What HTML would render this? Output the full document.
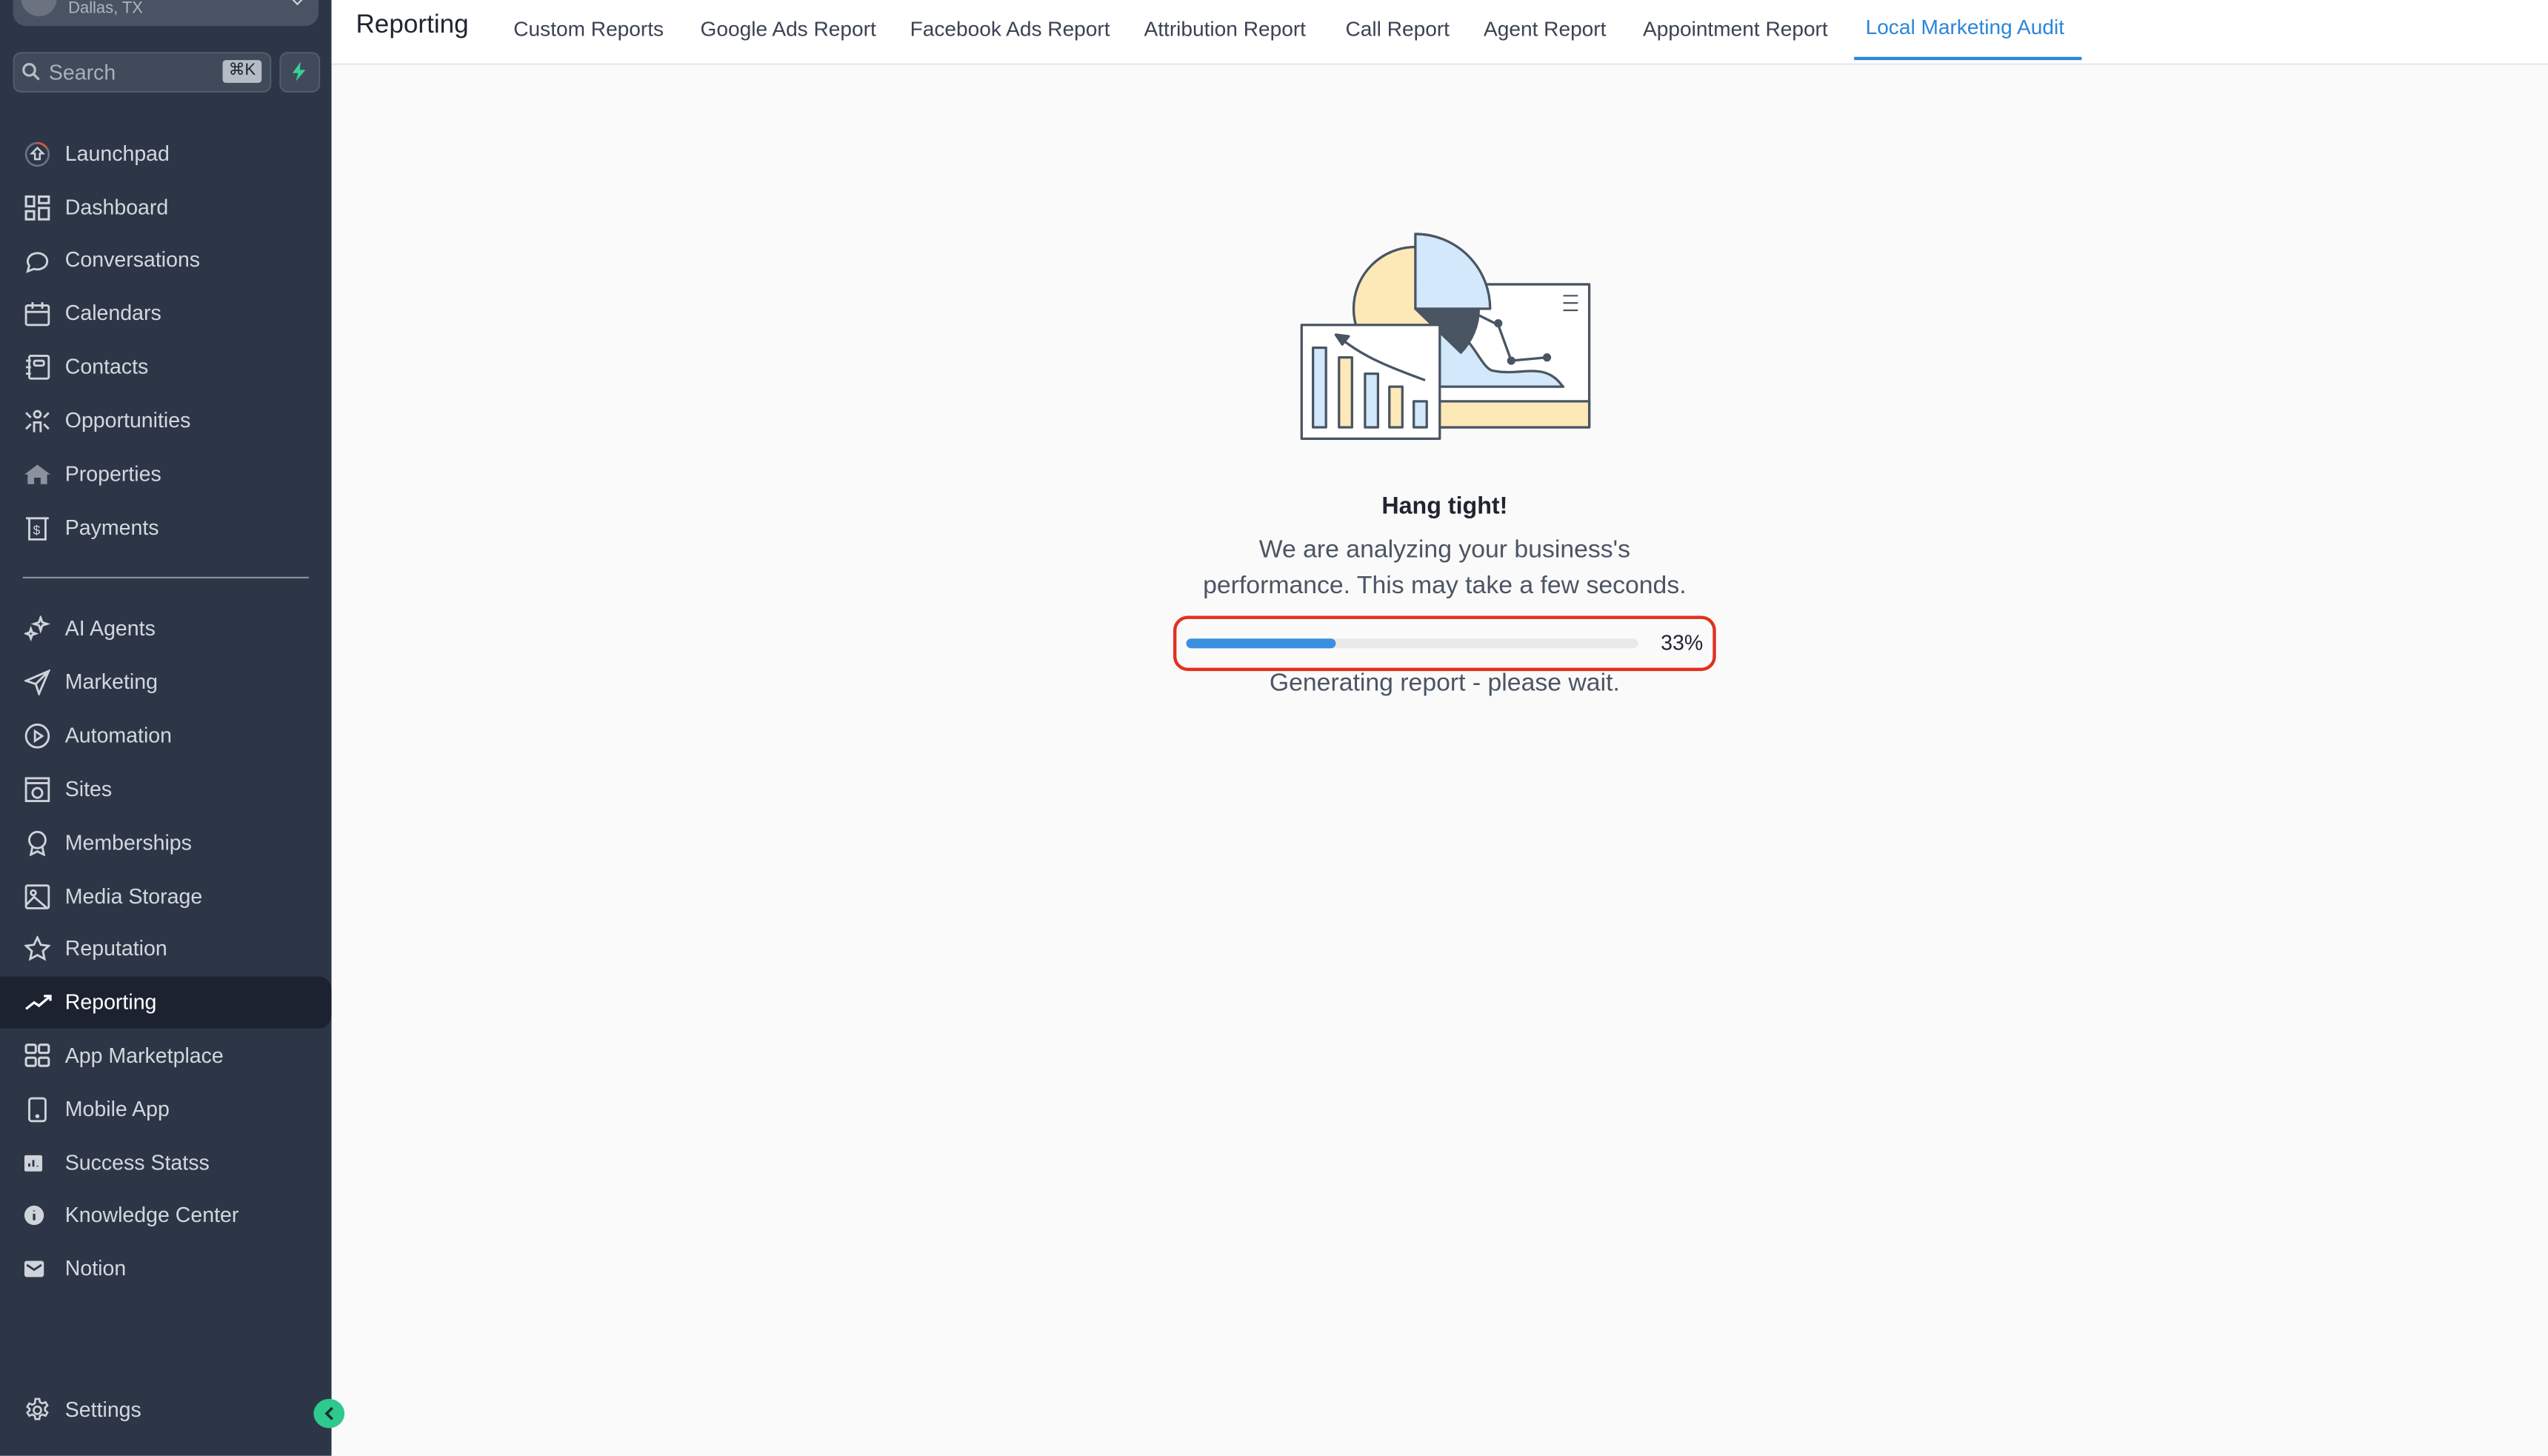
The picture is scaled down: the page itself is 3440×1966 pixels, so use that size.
<!DOCTYPE html>
<html><head><meta charset="utf-8"><style>
html,body{margin:0;padding:0;width:3440px;height:1966px;overflow:hidden;background:#fafafa;font-family:"Liberation Sans",sans-serif}
#w{position:absolute;left:0;top:0;width:1568px;height:896px;transform:scale(2.19388);transform-origin:0 0;background:#fafafa}
.sb{position:absolute;left:0;top:0;width:204px;height:896px;background:#2d3647}
.it{position:absolute;left:0;width:204px;height:32px;line-height:32px;color:#d3d7de;font-size:13px}
.it span{position:absolute;left:40px}
.it svg{position:absolute;left:15px;top:8px}
.act{background:#1c2230;border-radius:0 8px 8px 0;color:#fff}
.hdr{position:absolute;left:204px;top:0;right:0;height:39px;background:#fff;border-bottom:1px solid #e6e6e6}
.tab{position:absolute;top:10px;font-size:12.8px;color:#3b4252}
.c{position:absolute;left:204px;right:0;text-align:center;color:#4b5563}
</style></head><body><div id="w">
<div class="sb">
 <div style="position:absolute;left:8px;top:-14px;width:188px;height:30px;background:#4a5364;border-radius:8px"></div>
 <div style="position:absolute;left:13px;top:-12px;width:22px;height:22px;border-radius:50%;background:#6b7280"></div>
 <div style="position:absolute;left:42px;top:0;font-size:10px;color:#aeb4bd">Dallas, TX</div>
 <div style="position:absolute;left:180px;top:-4px;width:5px;height:5px;border-right:1.5px solid #cfd3da;border-bottom:1.5px solid #cfd3da;transform:rotate(45deg)"></div>
 <div style="position:absolute;left:8px;top:32px;width:157px;height:23px;background:#414a5a;border:1px solid #525b6a;border-radius:5px"></div>
 <svg style="position:absolute;left:13px;top:38px" width="12" height="12" viewBox="0 0 12 12"><circle cx="5" cy="5" r="3.5" stroke="#b7bcc5" stroke-width="1.5" fill="none"/><path d="M7.5 7.5L11 11" stroke="#b7bcc5" stroke-width="1.5"/></svg>
 <div style="position:absolute;left:30px;top:37px;font-size:13px;color:#a9afb9">Search</div>
 <div style="position:absolute;left:137px;top:37px;width:24px;height:14px;background:#b6bcc6;border-radius:2px;font-size:10px;line-height:14px;text-align:center;color:#1f2430">⌘K</div>
 <div style="position:absolute;left:172px;top:32px;width:23px;height:23px;background:#414a5a;border:1px solid #525b6a;border-radius:5px"></div>
 <svg style="position:absolute;left:178px;top:38px" width="12" height="12" viewBox="0 0 12 12"><path d="M7 0L2 7h3.5L4 12l6-7H6.5z" fill="#34d399"/></svg>

 <div class="it" style="top:79px"><svg width="16" height="16" viewBox="0 0 16 16"><circle cx="8" cy="8" r="7" stroke="#6b7482" fill="none" stroke-width="1.2"/><path d="M8 1a7 7 0 0 1 5.5 3" stroke="#e0533b" fill="none" stroke-width="1.2"/><path d="M8 4L4.5 7.5H6.5V11H9.5V7.5H11.5Z" stroke="#cfd3da" fill="none" stroke-width="1.1"/></svg><span>Launchpad</span></div>
 <div class="it" style="top:112px"><svg width="16" height="16" viewBox="0 0 16 16" fill="none" stroke="#cfd3da" stroke-width="1.4"><rect x="1" y="1" width="5" height="6"/><rect x="9" y="1" width="6" height="4"/><rect x="1" y="10" width="5" height="5"/><rect x="9" y="8" width="6" height="7"/></svg><span>Dashboard</span></div>
 <div class="it" style="top:144px"><svg width="16" height="16" viewBox="0 0 16 16" fill="none" stroke="#cfd3da" stroke-width="1.3"><path d="M2 15l1-3.5A6 5 0 1 1 6 13.5z"/></svg><span>Conversations</span></div>
 <div class="it" style="top:177px"><svg width="16" height="16" viewBox="0 0 16 16" fill="none" stroke="#cfd3da" stroke-width="1.3"><rect x="1" y="3" width="14" height="12" rx="1"/><path d="M1 7h14M5 1v4M11 1v4"/></svg><span>Calendars</span></div>
 <div class="it" style="top:210px"><svg width="16" height="16" viewBox="0 0 16 16" fill="none" stroke="#cfd3da" stroke-width="1.3"><rect x="3" y="1" width="12" height="14" rx="1"/><rect x="6" y="4" width="6" height="3" rx="1"/><path d="M1 4h3M1 8h3M1 12h3"/></svg><span>Contacts</span></div>
 <div class="it" style="top:243px"><svg width="16" height="16" viewBox="0 0 16 16" fill="none" stroke="#cfd3da" stroke-width="1.3"><circle cx="8" cy="4" r="2"/><path d="M6 15V9h4v6M1 3l3 3M15 3l-3 3M1 13l3-3M15 13l-3-3"/></svg><span>Opportunities</span></div>
 <div class="it" style="top:276px"><svg width="16" height="16" viewBox="0 0 16 16"><path d="M0 8L8 2l8 6h-2v6H10v-4H6v4H2V8z" fill="#8b929e"/></svg><span>Properties</span></div>
 <div class="it" style="top:309px"><svg width="16" height="16" viewBox="0 0 16 16" fill="none" stroke="#cfd3da" stroke-width="1.3"><path d="M1 2h14M3 2v13h10V2"/><text x="5.3" y="12" font-size="8" fill="#cfd3da" stroke="none" font-family="Liberation Sans">$</text></svg><span>Payments</span></div>
 <div style="position:absolute;left:14px;top:355px;width:176px;height:1px;background:#8a919c"></div>
 <div class="it" style="top:371px"><svg width="16" height="16" viewBox="0 0 16 16" fill="none" stroke="#cfd3da" stroke-width="1.3"><path d="M10 1l1 3 3 1-3 1-1 3-1-3-3-1 3-1zM4 8l.8 2.2L7 11l-2.2.8L4 14l-.8-2.2L1 11l2.2-.8z"/></svg><span>AI Agents</span></div>
 <div class="it" style="top:404px"><svg width="16" height="16" viewBox="0 0 16 16" fill="none" stroke="#cfd3da" stroke-width="1.3"><path d="M15 1L1 7l6 2 2 6zM7 9l8-8"/></svg><span>Marketing</span></div>
 <div class="it" style="top:437px"><svg width="16" height="16" viewBox="0 0 16 16" fill="none" stroke="#cfd3da" stroke-width="1.3"><circle cx="8" cy="8" r="7"/><path d="M6.5 5v6l4.5-3z"/></svg><span>Automation</span></div>
 <div class="it" style="top:470px"><svg width="16" height="16" viewBox="0 0 16 16" fill="none" stroke="#cfd3da" stroke-width="1.3"><rect x="1" y="1" width="14" height="14"/><path d="M1 4h14"/><circle cx="8" cy="10" r="3"/></svg><span>Sites</span></div>
 <div class="it" style="top:503px"><svg width="16" height="16" viewBox="0 0 16 16" fill="none" stroke="#cfd3da" stroke-width="1.3"><circle cx="8" cy="6" r="5"/><path d="M5 10l-1 5 4-2 4 2-1-5"/></svg><span>Memberships</span></div>
 <div class="it" style="top:536px"><svg width="16" height="16" viewBox="0 0 16 16" fill="none" stroke="#cfd3da" stroke-width="1.3"><rect x="1" y="1" width="14" height="14" rx="1"/><circle cx="5.5" cy="5.5" r="1.5"/><path d="M1 13l5-5 8 7"/></svg><span>Media Storage</span></div>
 <div class="it" style="top:568px"><svg width="16" height="16" viewBox="0 0 16 16" fill="none" stroke="#cfd3da" stroke-width="1.3"><path d="M8 1l2.1 4.5 4.9.6-3.6 3.3 1 4.8L8 11.8 3.6 14.2l1-4.8L1 6.1l4.9-.6z"/></svg><span>Reputation</span></div>
 <div class="it act" style="top:601px"><svg width="18" height="16" viewBox="0 0 18 16" fill="none" stroke="#fff" stroke-width="1.5"><path d="M1 12l5-4 3 2 7-6M12 4h4v3"/></svg><span>Reporting</span></div>
 <div class="it" style="top:634px"><svg width="16" height="16" viewBox="0 0 16 16" fill="none" stroke="#cfd3da" stroke-width="1.4"><rect x="1" y="1" width="6" height="5" rx="1"/><rect x="9" y="1" width="6" height="5" rx="1"/><rect x="1" y="9" width="6" height="5" rx="1"/><rect x="9" y="9" width="6" height="5" rx="1"/></svg><span>App Marketplace</span></div>
 <div class="it" style="top:667px"><svg width="16" height="16" viewBox="0 0 16 16" fill="none" stroke="#cfd3da" stroke-width="1.3"><rect x="3" y="1" width="10" height="14" rx="1.5"/><circle cx="8" cy="12" r=".6" fill="#cfd3da"/></svg><span>Mobile App</span></div>
 <div class="it" style="top:700px"><svg width="16" height="16" viewBox="0 0 16 16"><rect x="0" y="3" width="11" height="10" rx="1" fill="#cfd3da"/><path d="M3 10V8M5.5 10V6M8 10V9.5" stroke="#2d3647" stroke-width="1.3"/></svg><span>Success Statss</span></div>
 <div class="it" style="top:732px"><svg width="16" height="16" viewBox="0 0 16 16"><circle cx="6" cy="8" r="6" fill="#cfd3da"/><path d="M6 7v4M6 5v.5" stroke="#2d3647" stroke-width="1.5"/></svg><span>Knowledge Center</span></div>
 <div class="it" style="top:765px"><svg width="16" height="16" viewBox="0 0 16 16"><rect x="0" y="3" width="12" height="10" rx="1.5" fill="#cfd3da"/><path d="M1.5 5.5L6 8.5l4.5-3" stroke="#2d3647" stroke-width="1.3" fill="none"/></svg><span>Notion</span></div>
 <div class="it" style="top:852px"><svg width="16" height="16" viewBox="0 0 16 16" fill="none" stroke="#cfd3da" stroke-width="1.2"><circle cx="8" cy="8" r="2.3"/><path d="M6.8 1h2.4l.4 2 1.5.8 1.9-.8 1.2 2-1.5 1.4v1.6l1.5 1.4-1.2 2-1.9-.8-1.5.8-.4 2H6.8l-.4-2-1.5-.8-1.9.8-1.2-2 1.5-1.4V7.2L1.8 5.8l1.2-2 1.9.8 1.5-.8z"/></svg><span>Settings</span></div>
</div>
<div style="position:absolute;left:193px;top:861px;width:19px;height:18px;border-radius:50%;background:#2ec98c"></div>
<svg style="position:absolute;left:198px;top:865px" width="10" height="10" viewBox="0 0 10 10"><path d="M6.5 1.5L3 5l3.5 3.5" stroke="#1d2a33" stroke-width="1.6" fill="none"/></svg>

<div class="hdr">
 <div class="tab" style="left:15px;top:7px;font-size:16px;color:#1f2430">Reporting</div>
 <div class="tab" style="left:112px">Custom Reports</div>
 <div class="tab" style="left:227px">Google Ads Report</div>
 <div class="tab" style="left:356px">Facebook Ads Report</div>
 <div class="tab" style="left:500px">Attribution Report</div>
 <div class="tab" style="left:624px">Call Report</div>
 <div class="tab" style="left:709px">Agent Report</div>
 <div class="tab" style="left:807px">Appointment Report</div>
 <div class="tab" style="left:944px;top:9px;color:#2b86d9">Local Marketing Audit</div>
 <div style="position:absolute;left:937px;top:35px;width:140px;height:2px;background:#2b86d9"></div>
</div>

<svg style="position:absolute;left:0;top:0" width="1568" height="896" viewBox="0 0 1568 896" stroke="#4a5563" stroke-width="1.5" stroke-linejoin="round">
 <rect x="872" y="175" width="106" height="88" fill="#fff"/>
 <rect x="872" y="247" width="106" height="16" fill="#fde9b8"/>
 <path d="M962 182h9M962 186.5h9M962 191h9" stroke-width="1"/>
 <circle cx="871" cy="190" r="38" fill="#fde9b8"/>
 <path d="M886 200 C 905 202 910 225 918 228 C 935 232 950 222 961 237 L 962 238 L 886 238 Z" fill="#d3e8fb"/>
 <path d="M871 190 L910 190 A39 39 0 0 1 899 217 Z" fill="#4a5563"/>
 <path d="M871 190 L871 144 A46 46 0 0 1 917 190 Z" fill="#d3e8fb"/>
 <path d="M910 194 L922 200 L930 222 L952 220" fill="none"/>
 <circle cx="922" cy="199" r="1.8" fill="#4a5563"/><circle cx="930" cy="222" r="1.8" fill="#4a5563"/><circle cx="952" cy="220" r="1.8" fill="#4a5563"/>
 <rect x="801" y="200" width="85" height="70" fill="#fff"/>
 <rect x="808" y="214" width="8" height="49" fill="#d3e8fb"/>
 <rect x="824" y="220" width="8" height="43" fill="#fde9b8"/>
 <rect x="840" y="230" width="8" height="33" fill="#d3e8fb"/>
 <rect x="855" y="238" width="8" height="25" fill="#fde9b8"/>
 <rect x="870" y="247" width="8" height="16" fill="#d3e8fb"/>
 <path d="M877 234 C 855 226 840 220 826 209" fill="none"/>
 <path d="M822 206 L830 207 L826 212 Z" fill="#4a5563"/>
</svg>

<div class="c" style="top:304px;font-size:14.7px;font-weight:bold;color:#1f2430;margin-left:6px">Hang tight!</div>
<div class="c" style="top:328px;font-size:15.4px;line-height:22px;margin-left:6px">We are analyzing your business's<br>performance. This may take a few seconds.</div>
<div style="position:absolute;left:722px;top:379px;width:330px;height:30px;border:2px solid #e3301e;border-radius:9px"></div>
<div style="position:absolute;left:730px;top:393px;width:278px;height:6px;border-radius:3px;background:#e9e9e9"></div>
<div style="position:absolute;left:730px;top:393px;width:92px;height:6px;border-radius:3px;background:#3a8fe0"></div>
<div style="position:absolute;left:1022px;top:388px;font-size:13px;color:#1f2430">33%</div>
<div class="c" style="top:412px;font-size:15.4px;margin-left:6px">Generating report - please wait.</div>
</div></body></html>
